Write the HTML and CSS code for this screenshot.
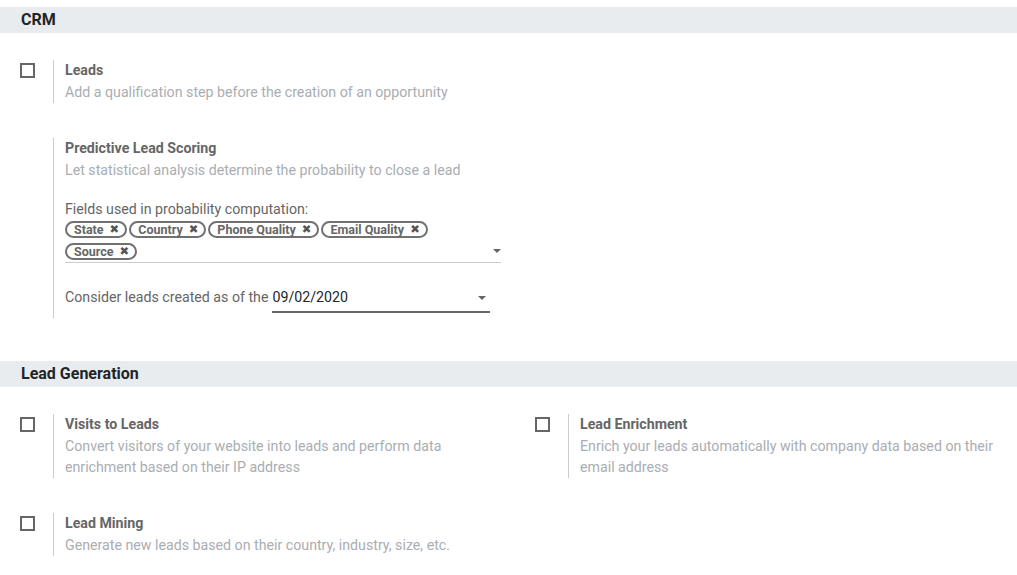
FILE: index.html
```html
<!DOCTYPE html>
<html>
<head>
<meta charset="utf-8">
<link rel="stylesheet" href="styles.css">
</head>
<body>
<div class="section-title">CRM</div>
<div class="settings">
  <div class="setting-box">
    <div class="left-pane"><span class="checkbox"></span></div>
    <div class="right-pane">
      <div class="label">Leads</div>
      <div class="desc">Add a qualification step before the creation of an opportunity</div>
    </div>
  </div>
  <div class="setting-box">
    <div class="left-pane"></div>
    <div class="right-pane">
      <div class="label">Predictive Lead Scoring</div>
      <div class="desc">Let statistical analysis determine the probability to close a lead</div>
      <div class="field-label">Fields used in probability computation:</div>
      <div class="tags-field">
        <div class="tags">
          <span class="tag">State<span class="x">✖</span></span>
          <span class="tag">Country<span class="x">✖</span></span>
          <span class="tag">Phone Quality<span class="x">✖</span></span>
          <span class="tag">Email Quality<span class="x">✖</span></span>
          <span class="tag">Source<span class="x">✖</span></span>
        </div>
        <span class="caret caret-tags"></span>
      </div>
      <div class="date-row">
        <span class="date-label">Consider leads created as of the</span>
        <span class="date-input"><span>09/02/2020</span><span class="caret"></span></span>
      </div>
    </div>
  </div>
</div>
<div class="section-title">Lead Generation</div>
<div class="settings grid">
  <div class="setting-box">
    <div class="left-pane"><span class="checkbox"></span></div>
    <div class="right-pane">
      <div class="label">Visits to Leads</div>
      <div class="desc">Convert visitors of your website into leads and perform data enrichment based on their IP address</div>
    </div>
  </div>
  <div class="setting-box">
    <div class="left-pane"><span class="checkbox"></span></div>
    <div class="right-pane">
      <div class="label">Lead Enrichment</div>
      <div class="desc">Enrich your leads automatically with company data based on their email address</div>
    </div>
  </div>
  <div class="setting-box">
    <div class="left-pane"><span class="checkbox"></span></div>
    <div class="right-pane">
      <div class="label">Lead Mining</div>
      <div class="desc">Generate new leads based on their country, industry, size, etc.</div>
    </div>
  </div>
</div>
</body>
</html>
```
FILE: styles.css
```css
html, body {
  margin: 0;
  padding: 0;
  background: #fff;
  font-family: Roboto, "Liberation Sans", sans-serif;
  font-size: 14.2px;
  line-height: 21px;
  color: #666;
}
.section-title {
  margin-top: 7px;
  height: 26px;
  line-height: 26px;
  background: #e9ecef;
  padding-left: 21px;
  font-size: 16px;
  font-weight: 700;
  color: #212529;
}
.settings {
  display: flex;
  flex-direction: column;
  gap: 35px;
  padding: 27px 0 36px;
}
.settings.grid {
  display: grid;
  grid-template-columns: 515px 1fr;
  row-gap: 35px;
  column-gap: 0;
  padding-top: 27px;
}
.setting-box {
  display: flex;
  padding-left: 20px;
  padding-right: 15px;
}
.left-pane {
  width: 33px;
  flex: none;
  border-right: 1px solid #ccc;
  padding-top: 3px;
}
.checkbox {
  display: block;
  width: 11px;
  height: 11px;
  border: 2px solid #666;
  background: #fff;
}
.right-pane {
  padding-left: 11px;
  max-width: 436px;
}
.label {
  font-weight: 700;
  color: #666;
  margin-bottom: 1px;
}
.desc {
  color: #aaadb2;
}
.field-label {
  margin-top: 18px;
  color: #666;
}
.tags-field {
  position: relative;
  width: 436px;
  border-bottom: 1px solid #ccc;
  padding-bottom: 2px;
}
.tags {
  display: flex;
  flex-wrap: wrap;
  gap: 5px 2px;
  padding-top: 1px;
  width: 420px;
}
.tag {
  display: inline-flex;
  align-items: center;
  height: 13px;
  line-height: 13px;
  padding: 0 6px 0 7px;
  border: 2px solid #717171;
  border-radius: 10px;
  font-size: 12.5px;
  font-weight: 700;
  color: #666;
  white-space: pre;
}
.x {
  font-family: "DejaVu Sans", sans-serif;
  font-size: 11.5px;
  margin-left: 6px;
  color: #555;
}
.caret {
  display: inline-block;
  width: 0;
  height: 0;
  border-left: 4px solid transparent;
  border-right: 4px solid transparent;
  border-top: 4px solid #666;
}
.caret-tags {
  position: absolute;
  right: 0;
  bottom: 9px;
}
.date-row {
  display: flex;
  align-items: baseline;
  margin-top: 24px;
  padding-bottom: 5px;
}
.date-label {
  margin-right: 4px;
}
.date-input {
  display: flex;
  align-items: center;
  justify-content: space-between;
  width: 214px;
  padding-right: 4px;
  padding-bottom: 3px;
  border-bottom: 2px solid #666;
  color: #212529;
  line-height: 21px;
}
```
